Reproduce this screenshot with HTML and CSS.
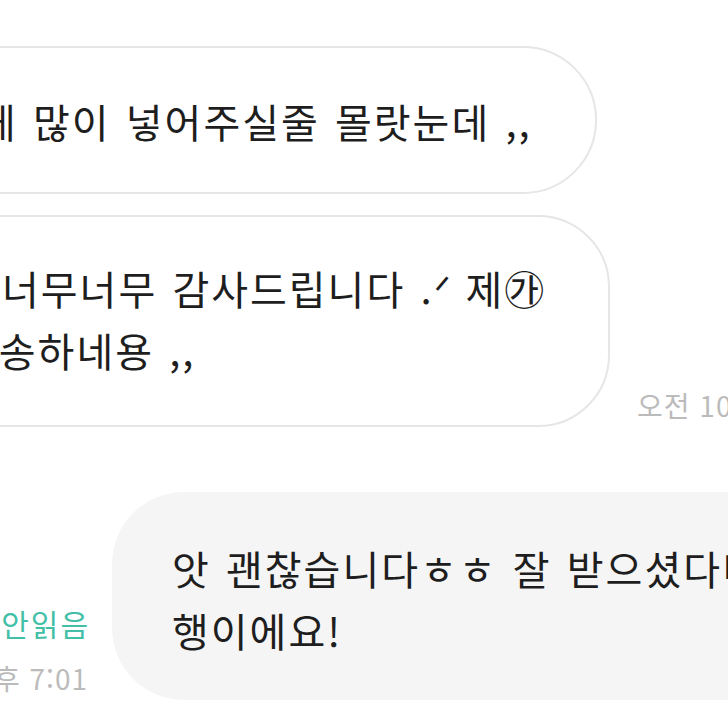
FILE: index.html
```html
<!DOCTYPE html>
<html lang="ko">
<head>
    <meta charset="UTF-8">
    <meta name="viewport" content="width=device-width, initial-scale=1.0">
    <title>Chat</title>
    <link rel="stylesheet" href="styles.css">
</head>
<body>
    <div class="chat">
        <div class="row recv">
            <div class="bubble line single">게 많이 넣어주실줄 몰랏눈데 ,,</div>
        </div>

        <div class="row recv">
            <div class="bubble line double"><span class="indent">너무너무 감사드립니다 .ᐟ 제㉮</span><br>죄송하네용 ,,</div>
            <span class="time stamp">오전 10:52</span>
        </div>

        <div class="row sent">
            <div class="meta">
                <span class="unread">안읽음</span>
                <span class="time">오후 7:01</span>
            </div>
            <div class="bubble fill">앗 괜찮습니다ㅎㅎ 잘 받으셨다니 다<br>행이에요!</div>
        </div>
    </div>
</body>
</html>
```

FILE: styles.css
```css
body {
    margin: 0;
    width: 728px;
    height: 728px;
    overflow: hidden;
    background-color: #fff;
    font-family: 'Noto Sans CJK KR', 'Noto Sans', sans-serif;
    color: #1e1e1e;
}
.chat {
    display: flex;
    flex-direction: column;
    padding-top: 46px;
}
.row {
    display: flex;
    align-items: flex-end;
}
.bubble {
    flex-shrink: 0;
    font-size: 40px;
    line-height: 62px;
    letter-spacing: 2px;
    word-spacing: 2px;
    white-space: nowrap;
    box-sizing: border-box;
}
.line {
    background-color: #fff;
    border: 2px solid #e6e6e6;
    margin-left: -80px;
}
.single {
    width: 677px;
    height: 148px;
    border-radius: 74px;
    padding: 42px 0 0 57px;
}
.double {
    width: 690px;
    height: 212px;
    border-radius: 72px;
    margin-top: 21px;
    padding: 40px 0 0 38px;
}
.indent {
    padding-left: 42px;
}
.time {
    font-size: 28px;
    line-height: 34px;
    letter-spacing: 1px;
    color: #bbb;
    white-space: nowrap;
}
.stamp {
    margin-left: 27px;
    margin-bottom: 5px;
}
.sent {
    margin-top: 65px;
    gap: 24px;
}
.meta {
    flex: 0 0 88px;
    width: 88px;
    min-width: 0;
    display: flex;
    flex-direction: column;
    align-items: flex-end;
    gap: 21px;
    margin-bottom: 5px;
}
.unread {
    font-size: 30px;
    line-height: 34px;
    letter-spacing: 2px;
    margin-right: -2px;
    color: #43bfa8;
    white-space: nowrap;
}
.fill {
    height: 208px;
    border-radius: 72px;
    background-color: #f5f5f5;
    padding: 45px 60px 0 60px;
}
```
